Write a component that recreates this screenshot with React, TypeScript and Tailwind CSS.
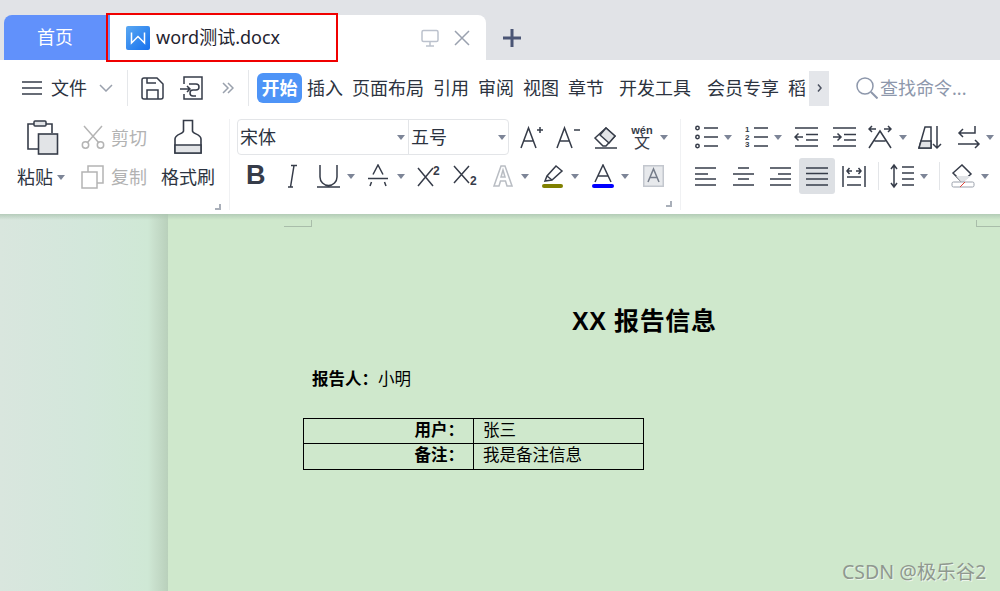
import type { ReactNode } from "react";

const INK = "#363c49";

function Ic({
  w,
  h = 24,
  className = "",
  color = INK,
  children,
}: {
  w: number;
  h?: number;
  className?: string;
  color?: string;
  children: ReactNode;
}) {
  return (
    <svg
      width={w}
      height={h}
      viewBox={`0 0 ${w} ${h}`}
      fill="none"
      stroke={color}
      strokeWidth={1.5}
      className={`shrink-0 ${className}`}
    >
      {children}
    </svg>
  );
}

function Tri({ className = "" }: { className?: string }) {
  return (
    <svg width="8" height="5" viewBox="0 0 8 5" className={`shrink-0 ${className}`}>
      <path d="M0 0h8L4 5z" fill="#7d8597" />
    </svg>
  );
}

function Launcher() {
  return (
    <div className="flex justify-end h-[6px] mt-[7px] mr-[8px]">
      <div className="w-[6px] h-[6px] border-r-2 border-b-2 border-[#a9afb9]" />
    </div>
  );
}

function Tab({ label, active }: { label: string; active?: boolean }) {
  if (active) {
    return (
      <div className="h-[30px] w-[45px] rounded-[6px] bg-[#4e94f7] text-white font-bold text-[18px] flex items-center justify-center">
        {label}
      </div>
    );
  }
  return <span className="text-[18px] text-[#2c3340] whitespace-nowrap">{label}</span>;
}

export default function App() {
  return (
    <div className="relative w-[1000px] h-[591px] overflow-hidden bg-white font-['Noto_Sans','Noto_Sans_CJK_SC',sans-serif]">
      {/* Tab strip */}
      <div className="h-[60px] bg-[#e1e3e7] flex items-end">
        <div className="ml-[4px] w-[106px] h-[45px] rounded-tl-[8px] bg-[#6191fb] text-white text-[18px] flex items-center pl-[33px]">
          首页
        </div>
        <div className="w-[376px] h-[45px] rounded-tr-[8px] bg-white flex items-center pl-[16px] pr-[16px]">
          <div className="w-[24px] h-[24px] rounded-[2px] bg-[linear-gradient(135deg,#5aa8f2,#1570ee)] flex items-center justify-center">
            <svg width="24" height="24" viewBox="0 0 24 24" fill="none" stroke="#fff" strokeWidth="1.5">
              <path d="M5.500 6.500v10.500l6.500-6.500 6.500 6.500V6.500" />
            </svg>
          </div>
          <span className="ml-[6px] text-[18px] text-[#1f2430]">word测试.docx</span>
          <Ic w={18} h={18} color="#bcc2cd" className="ml-auto">
            <rect x="1" y="1.500" width="16" height="11" rx="1.500" />
            <path d="M9 12.500v4M5 17h8" />
          </Ic>
          <Ic w={16} h={16} color="#9aa1af" className="ml-[15px]">
            <path d="M1 1l14 14M15 1L1 15" />
          </Ic>
        </div>
        <div className="self-center mt-[16px] ml-[17px]">
          <svg width="18" height="18" viewBox="0 0 18 18" fill="none" stroke="#4a5575" strokeWidth="3">
            <path d="M9 0v18M0 9h18" />
          </svg>
        </div>
      </div>

      {/* Menu row */}
      <div className="h-[50px] pt-[6px] flex items-center">
        <Ic w={20} h={16} className="ml-[22px]">
          <path d="M0 2h20M0 8h20M0 14h20" />
        </Ic>
        <span className="ml-[9px] text-[18px] text-[#2c3340]">文件</span>
        <Ic w={14} h={8} color="#9aa1ad" className="ml-[12px]">
          <path d="M1 1l6 6 6-6" />
        </Ic>
        <div className="ml-[14px] w-px h-[36px] bg-[#e5e7ea]" />
        <Ic w={23} h={23} className="ml-[13px]">
          <path d="M1 3a2 2 0 0 1 2-2h13l6 6v13a2 2 0 0 1-2 2H3a2 2 0 0 1-2-2z" />
          <path d="M6 22v-9h11v9M6 1v5h9" />
        </Ic>
        <Ic w={23} h={24} className="ml-[16px]">
          <path d="M4 8V1h18v22H4v-5" />
          <path d="M0 13h10M7 10l3 3-3 3" />
          <path d="M9 8h7a3 3 0 0 1 0 6h-3a3 3 0 0 0 0 6h3" />
        </Ic>
        <Ic w={12} h={12} color="#9aa1ad" className="ml-[19px]">
          <path d="M1 1l5 5-5 5M6 1l5 5-5 5" />
        </Ic>
        <div className="ml-[14px] w-px h-[36px] bg-[#e5e7ea]" />
        <div className="ml-[8px] flex items-center">
          <Tab label="开始" active />
          <div className="ml-[5px]"><Tab label="插入" /></div>
          <div className="ml-[9px]"><Tab label="页面布局" /></div>
          <div className="ml-[9px]"><Tab label="引用" /></div>
          <div className="ml-[9px]"><Tab label="审阅" /></div>
          <div className="ml-[9px]"><Tab label="视图" /></div>
          <div className="ml-[9px]"><Tab label="章节" /></div>
          <div className="ml-[15px]"><Tab label="开发工具" /></div>
          <div className="ml-[16px]"><Tab label="会员专享" /></div>
          <div className="ml-[9px]"><Tab label="稻" /></div>
        </div>
        <div className="ml-[3px] w-[20px] h-[35px] bg-[#e4e6ea] flex items-center justify-center">
          <Ic w={5} h={8} color="#4b5160">
            <path d="M1 0.500l3 3.500-3 3.500" />
          </Ic>
        </div>
        <Ic w={22} h={22} color="#8d97ab" className="ml-[27px]">
          <circle cx="9" cy="9" r="8" />
          <path d="M15 15l6.500 6.500" strokeWidth="2" />
        </Ic>
        <span className="ml-[2px] text-[18px] text-[#8d97ab] whitespace-nowrap">查找命令...</span>
      </div>

      {/* Ribbon */}
      <div className="h-[104px] pt-[9px] flex items-start">
        {/* Clipboard group */}
        <div className="w-[230px] h-[91px] border-r border-[#f0f1f3] shrink-0">
          <div className="flex h-[78px]">
            <div className="ml-[17px] w-[47px] flex flex-col">
              <div className="h-[36px] flex items-center pl-[8px]">
                <Ic w={34} h={36}>
                  <path d="M13 30H3V5h24v9" strokeWidth="1.600" />
                  <rect x="9" y="2" width="12" height="5" rx="1" fill="#e2e4e7" />
                  <rect x="13.500" y="15" width="19" height="20" fill="#e2e4e7" strokeWidth="1.600" />
                </Ic>
              </div>
              <div className="h-[36px] mt-[4px] flex items-center text-[18px] text-[#2c3340] whitespace-nowrap">
                粘贴
                <Tri className="ml-[4px]" />
              </div>
            </div>
            <div className="ml-[17px] w-[80px] flex flex-col text-[18px] text-[#b2b2b2]">
              <div className="h-[36px] flex items-center">
                <Ic w={24} h={24} color="#b4b4b4">
                  <path d="M3 1l15 17M21 1L6 18" />
                  <circle cx="4.500" cy="20" r="3.200" />
                  <circle cx="19.500" cy="20" r="3.200" />
                </Ic>
                <span className="ml-[6px] mt-[2px]">剪切</span>
              </div>
              <div className="h-[36px] mt-[4px] flex items-center">
                <Ic w={24} h={24} color="#b4b4b4">
                  <path d="M7 7V1h15v17h-6" />
                  <rect x="1" y="7" width="15" height="16" />
                </Ic>
                <span className="ml-[6px]">复制</span>
              </div>
            </div>
            <div className="w-[54px] flex flex-col">
              <div className="h-[36px] flex items-center pl-[13px]">
                <Ic w={28} h={36}>
                  <path d="M9.500 1.500h9V12c0 3 8.500 3 8.500 8v14H1V20c0-5 8.500-5 8.500-8z" strokeWidth="1.600" />
                  <path d="M1 26h26v8H1z" fill="#e2e4e7" strokeWidth="1.600" />
                </Ic>
              </div>
              <div className="h-[36px] mt-[4px] flex items-center text-[18px] text-[#2c3340] whitespace-nowrap">
                格式刷
              </div>
            </div>
          </div>
          <Launcher />
        </div>

        {/* Font group */}
        <div className="w-[451px] h-[91px] shrink-0 border-r border-[#f0f1f3]">
          <div className="flex items-center h-[36px]">
            <div className="ml-[7px] w-[272px] h-[36px] border border-[#e3e5e8] rounded-[4px] flex items-center text-[18px] text-[#2c3340] shrink-0">
              <div className="w-[171px] h-full flex items-center pl-[2px] border-r border-[#e3e5e8]">
                宋体
                <Tri className="ml-auto mr-[3px]" />
              </div>
              <div className="flex-1 h-full flex items-center pl-[2px]">
                五号
                <Tri className="ml-auto mr-[2px]" />
              </div>
            </div>
            <Ic w={23} h={24} className="ml-[11px]">
              <path d="M1 23L8.500 3 16 23M4 16h9" />
              <path d="M17 5h6M20 2v6" />
            </Ic>
            <Ic w={24} h={24} className="ml-[13px]">
              <path d="M1 23L8.500 3 16 23M4 16h9" />
              <path d="M18 5h6" />
            </Ic>
            <Ic w={24} h={24} className="ml-[13px]">
              <path d="M2 13L13 3l9 8-9 10h-3z" fill="#fff" />
              <path d="M13 3l9 8-6 7-9-8z" fill="#e2e4e7" />
              <path d="M2 23h22" />
            </Ic>
            <div className="ml-[13px] w-[24px] flex flex-col items-center text-[#363c49]">
              <span className="text-[11px] font-bold leading-[10px] font-['Liberation_Sans',sans-serif]">wén</span>
              <span className="text-[16px] leading-[15px]">文</span>
            </div>
            <Tri className="ml-[6px]" />
          </div>
          <div className="flex items-center h-[36px] mt-[3px]">
            <span className="ml-[16px] w-[19px] mb-[2px] text-[27px] font-bold leading-none text-[#363c49] font-['Liberation_Sans',sans-serif]">B</span>
            <Ic w={13} h={24} className="ml-[20px]">
              <path d="M3 23h5M6 1.500h6M9 1.500L5.500 23" />
            </Ic>
            <Ic w={23} h={24} className="ml-[19px]">
              <path d="M3 1v12a8.500 8.500 0 0 0 17 0V1M0 23h23" />
            </Ic>
            <Tri className="ml-[7px]" />
            <Ic w={22} h={24} className="ml-[12px]">
              <path d="M6 10.500L11 1l5 9.500M1 14.500h20M4.500 18L3 22M17.500 18L19 22" />
            </Ic>
            <Tri className="ml-[8px]" />
            <Ic w={24} h={24} className="ml-[12px]">
              <path d="M1 4l15 18M16 4L1 22" />
              <text x="16" y="11" fontSize="12" fontWeight="700" fill={INK} stroke="none" fontFamily="Liberation Sans">2</text>
            </Ic>
            <Ic w={25} h={24} className="ml-[12px]">
              <path d="M1 2l15 17M16 2L1 19" />
              <text x="17" y="21" fontSize="12" fontWeight="700" fill={INK} stroke="none" fontFamily="Liberation Sans">2</text>
            </Ic>
            <Ic w={20} h={24} color="#b9bdc3" className="ml-[15px]">
              <path d="M1 22L8 2h4l7 20h-5l-1.500-5h-5L6 22zM8 13h4l-2-7z" fill="#fff" />
            </Ic>
            <Tri className="ml-[8px]" />
            <Ic w={22} h={24} className="ml-[13px]">
              <path d="M3 17l2-5L14 2l6 5-10 9z" />
              <path d="M5 12l5 4" />
              <rect x="0" y="20" width="21" height="4" rx="2" fill="#808000" stroke="none" />
            </Ic>
            <Tri className="ml-[7px]" />
            <Ic w={22} h={24} className="ml-[13px]">
              <path d="M3 18L11 1l8 17M6 12h10" />
              <rect x="0" y="20" width="22" height="4" rx="2" fill="#0000ff" stroke="none" />
            </Ic>
            <Tri className="ml-[7px]" />
            <Ic w={21} h={22} color="#767d8a" className="ml-[14px]">
              <rect x="0.750" y="0.750" width="19.500" height="20.500" fill="#e7e9ec" stroke="#c3c7ce" />
              <path d="M5 17l5.500-13L16 17M7 12.500h7" />
            </Ic>
          </div>
          <Launcher />
        </div>

        {/* Paragraph group */}
        <div className="flex-1 min-w-0">
          <div className="flex items-center h-[36px]">
            <Ic w={23} h={24} className="ml-[14px]">
              <circle cx="2.500" cy="3" r="1.700" />
              <circle cx="2.500" cy="12" r="1.700" />
              <circle cx="2.500" cy="21" r="1.700" />
              <path d="M9 3h14M9 12h14M9 21h14" />
            </Ic>
            <Tri className="ml-[6px]" />
            <Ic w={23} h={24} className="ml-[13px]">
              <text x="0" y="7" fontSize="8" fontWeight="700" fill={INK} stroke="none" fontFamily="Liberation Sans">1</text>
              <text x="0" y="15" fontSize="8" fontWeight="700" fill={INK} stroke="none" fontFamily="Liberation Sans">2</text>
              <text x="0" y="22" fontSize="8" fontWeight="700" fill={INK} stroke="none" fontFamily="Liberation Sans">3</text>
              <path d="M9 3h14M9 12h14M9 21h14" />
            </Ic>
            <Tri className="ml-[6px]" />
            <Ic w={24} h={24} className="ml-[12px]">
              <path d="M1 3h23M12 9.500h12M12 15h12M1 21h23M1 12h8M4.500 8.500L1 12l3.500 3.500" />
            </Ic>
            <Ic w={24} h={24} className="ml-[14px]">
              <path d="M1 3h23M12 9.500h12M12 15h12M1 21h23M1 12h8M5.500 8.500L9 12l-3.500 3.500" />
            </Ic>
            <Ic w={24} h={24} className="ml-[12px]">
              <path d="M1 4h7M4 1L1 4l3 3M16 4h7M20 1l3 3-3 3M1 23L12 6l11 17M6.500 16h11" />
            </Ic>
            <Tri className="ml-[7px]" />
            <Ic w={24} h={26} className="ml-[11px]">
              <path d="M1 24L7 3h6v21z" />
              <path d="M3 17h10v7H1z" fill="#e2e4e7" />
              <path d="M19 2v22M15 20l4 4 4-4" />
            </Ic>
            <Ic w={24} h={24} className="ml-[15px]">
              <path d="M18 1v7H2M6 4L2 8l4 4" />
              <path d="M1 19h21M18 15l4 4-4 4" />
            </Ic>
            <Tri className="ml-[5px]" />
          </div>
          <div className="flex items-center h-[36px] mt-[3px]">
            <Ic w={22} h={20} className="ml-[14px]">
              <path d="M0 2h21M0 8h13M0 13h21M0 19h21" />
            </Ic>
            <Ic w={21} h={20} className="ml-[16px]">
              <path d="M0 19h21M5 13h11M0 8h21M5 2h11" />
            </Ic>
            <Ic w={22} h={20} className="ml-[15px]">
              <path d="M1 2h21M9 8h13M1 13h21M1 19h21" />
            </Ic>
            <div className="ml-[8px] w-[36px] h-[36px] rounded-[3px] bg-[#dde0e4] flex items-center justify-center">
              <Ic w={22} h={20}>
                <path d="M0 2h22M0 7.500h22M0 13h22M0 19h22" />
              </Ic>
            </div>
            <Ic w={24} h={24} className="ml-[7px]">
              <path d="M1 2v21M23 2v21M5 13h14M5 21h14M5 7h5M7.500 4L5 7l2.500 3M14 7h5M16.500 4L19 7l-2.500 3" />
            </Ic>
            <div className="ml-[12px] w-px h-[28px] bg-[#e3e5e8]" />
            <Ic w={24} h={26} className="ml-[11px]">
              <path d="M4 2v22M1 6l3-4 3 4M1 20l3 4 3-4M12 4h12M12 10h12M12 16h12M12 22h12" />
            </Ic>
            <Tri className="ml-[6px]" />
            <div className="ml-[11px] w-px h-[28px] bg-[#e3e5e8]" />
            <Ic w={24} h={24} className="ml-[11px]">
              <path d="M2 9L11 1l9 9-9 8z" />
              <path d="M5 12h15l-9 7z" fill="#e2e4e7" stroke="none" />
              <rect x="1" y="18" width="22" height="5" rx="1.500" fill="#fff" stroke="#9aa0ab" strokeWidth="1" />
              <path d="M9 23l5-5" stroke="#e0453a" strokeWidth="1" />
            </Ic>
            <Tri className="ml-[6px]" />
          </div>
        </div>
      </div>

      {/* Document area */}
      <div className="flex h-[377px]">
        <div className="w-[168px] shrink-0 bg-[linear-gradient(90deg,#d9e6de_0%,#d3e7db_50%,#cfe8d5_88%,#c8dfcc_92%,#b9d0bb_100%)]" />
        <div className="relative flex-1 bg-[#cfe8cc] pt-[92px]">
          <div className="absolute left-[116px] top-[12px] w-[28px] h-px bg-[#a9bdaa]" />
          <div className="absolute left-[143px] top-[6px] w-px h-[7px] bg-[#a9bdaa]" />
          <div className="absolute left-[808px] top-[12px] w-[24px] h-px bg-[#a9bdaa]" />
          <div className="absolute left-[808px] top-[6px] w-px h-[7px] bg-[#a9bdaa]" />
          <h1 className="pl-[404px] text-[25px] leading-[30px] font-bold tracking-[0.6px] text-black whitespace-nowrap font-['Liberation_Sans','Noto_Sans_CJK_SC',sans-serif]">
            XX 报告信息
          </h1>
          <p className="mt-[31px] pl-[144px] text-[16.5px] leading-[24px] text-black">
            <b>报告人：</b>
            <span>小明</span>
          </p>
          <table className="mt-[27px] ml-[135px] w-[341px] border-collapse text-[16.5px] leading-[20px] text-black table-fixed">
            <tbody>
              <tr className="h-[25px]">
                <td className="w-[170px] border border-black text-right pr-[9px] pb-[3px] font-bold">用户：</td>
                <td className="border border-black pl-[9px] pb-[3px]">张三</td>
              </tr>
              <tr className="h-[26px]">
                <td className="border border-black text-right pr-[9px] pb-[3px] font-bold">备注：</td>
                <td className="border border-black pl-[9px] pb-[3px]">我是备注信息</td>
              </tr>
            </tbody>
          </table>
        </div>
      </div>
      <div className="absolute left-0 right-0 top-[214px] h-[6px] bg-[linear-gradient(180deg,rgba(170,195,175,0.75),rgba(205,230,208,0))]" />

      {/* Annotation over the doc tab */}
      <div className="absolute left-[106px] top-[13px] w-[232px] h-[49px] border-2 border-[#f00000]" />

      {/* Watermark */}
      <div className="absolute left-[842px] top-[558px] text-[19.500px] leading-[28px] text-[#8f988f] whitespace-nowrap [text-shadow:1px_1px_0_rgba(255,255,255,0.6)]">
        CSDN @极乐谷2
      </div>
    </div>
  );
}
